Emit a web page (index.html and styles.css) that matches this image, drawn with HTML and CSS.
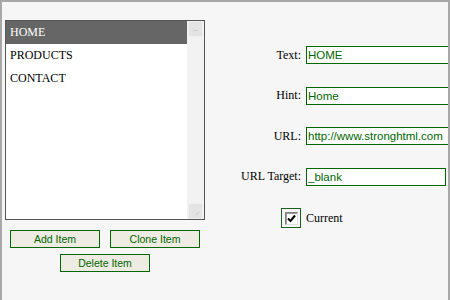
FILE: index.html
```html
<!DOCTYPE html>
<html lang="en">
<head>
  <meta charset="UTF-8">
  <title>Menu Editor</title>
  <link rel="stylesheet" href="styles.css">
</head>
<body>
  <div class="frame">
    <div class="left">
      <div class="list">
        <div class="items">
          <div class="item selected">HOME</div>
          <div class="item">PRODUCTS</div>
          <div class="item">CONTACT</div>
        </div>
        <div class="scroll">
          <span class="arrow up"></span>
          <span class="arrow down"></span>
        </div>
      </div>
      <div class="buttons">
        <button class="btn">Add Item</button>
        <button class="btn">Clone Item</button>
        <button class="btn">Delete Item</button>
      </div>
    </div>

    <div class="form">
      <label class="label">Text:</label>
      <input type="text" class="field" value="HOME">

      <label class="label">Hint:</label>
      <input type="text" class="field" value="Home">

      <label class="label">URL:</label>
      <input type="text" class="field" value="http://www.stronghtml.com">

      <label class="label">URL Target:</label>
      <input type="text" class="field short" value="_blank">

      <div class="label">
        <span class="check-box">
          <span class="tick">
            <svg width="9" height="9" viewBox="0 0 9 9"><path d="M1 4.5 L3.5 7 L8 1.5" fill="none" stroke="#000" stroke-width="2"/></svg>
          </span>
        </span>
      </div>
      <div class="check-text">Current</div>
    </div>
  </div>
</body>
</html>
```

FILE: styles.css
```css
body {
  margin: 0;
  padding: 0;
  background-color: #f6f6f6;
  font-family: "Liberation Serif", "Times New Roman", serif;
  font-size: 12px;
  overflow: hidden;
}

.frame {
  width: 450px;
  height: 300px;
  box-sizing: border-box;
  border: 2px solid #a8a8a8;
  border-bottom: none;
  background-color: #f6f6f6;
  display: flex;
  padding: 18px 0 0 3px;
  overflow: hidden;
}

.left {
  width: 200px;
  flex-shrink: 0;
}

.list {
  width: 200px;
  height: 200px;
  box-sizing: border-box;
  border: 1px solid #555;
  display: flex;
  background: #fff;
}

.items {
  flex: 1;
}

.item {
  height: 23px;
  line-height: 23px;
  padding-left: 4px;
  color: #000;
}

.item.selected {
  background-color: #666;
  color: #fff;
}

.scroll {
  width: 17px;
  background-color: #f2f2f2;
  display: flex;
  flex-direction: column;
  justify-content: space-between;
}

.arrow {
  display: block;
  width: 15px;
  height: 16px;
  margin: 0 1px;
  box-sizing: border-box;
  background: #e4e4e4;
  border: 1px solid #efefef;
  position: relative;
}

.arrow::after {
  content: "";
  position: absolute;
  left: 4px;
  width: 5px;
  height: 1px;
  background: #cccccc;
}

.arrow.up::after { top: 8px; }
.arrow.down::after { top: 9px; transform: rotate(-45deg); left: 6px; }

.buttons {
  margin-top: 10px;
  display: flex;
  flex-wrap: wrap;
  justify-content: center;
  gap: 6px 10px;
}

.btn {
  width: 90px;
  height: 18px;
  padding: 0;
  box-sizing: border-box;
  border: 1px solid #006600;
  background-color: #eeebe2;
  color: #006600;
  font-family: "Liberation Sans", Arial, sans-serif;
  font-size: 10.5px;
}

.form {
  display: grid;
  grid-template-columns: 96px auto;
  column-gap: 5px;
  row-gap: 22.5px;
  margin-top: 26px;
  align-items: center;
  align-content: start;
}

.label {
  text-align: right;
  color: #000;
  white-space: nowrap;
}

.field {
  width: 200px;
  height: 18px;
  margin: 0;
  box-sizing: border-box;
  border: 1px solid #006600;
  padding: 0 1px;
  background: #fff;
  color: #006600;
  font-family: "Liberation Sans", Arial, sans-serif;
  font-size: 11.5px;
}

.field.short {
  width: 140px;
}

.check-box {
  display: inline-flex;
  width: 20px;
  height: 20px;
  box-sizing: border-box;
  border: 1px solid #1d5e1d;
  align-items: center;
  justify-content: center;
  vertical-align: top;
}

.tick {
  display: flex;
  width: 13px;
  height: 13px;
  box-sizing: border-box;
  border: 1px solid #808080;
  border-right-color: #dcdcdc;
  border-bottom-color: #dcdcdc;
  box-shadow: inset 1px 1px 0 #9a9a9a;
  background: #fff;
  align-items: center;
  justify-content: center;
}

.check-text {
  color: #000;
}
```
